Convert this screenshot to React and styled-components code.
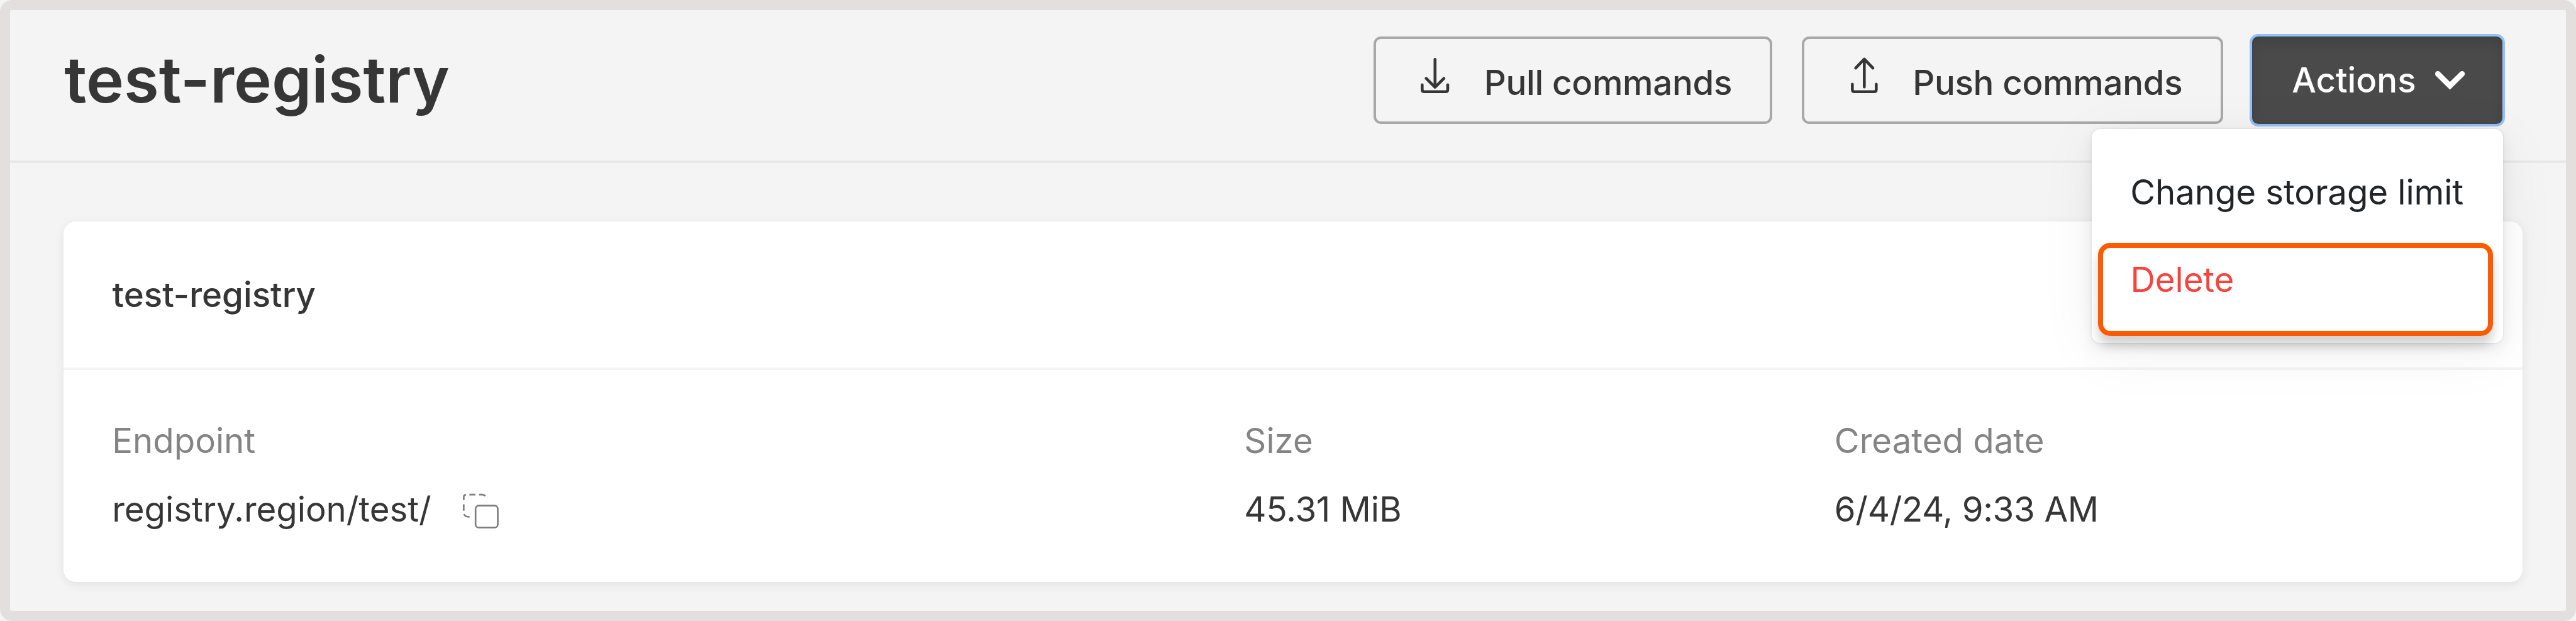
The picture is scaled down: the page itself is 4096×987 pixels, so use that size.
import React from "react";
import styled, { createGlobalStyle } from "styled-components";

const u = (n) => `${+(n * 0.975).toFixed(3)}px`;

const GlobalStyle = createGlobalStyle`
  *, *::before, *::after { box-sizing: border-box; }
  html, body { margin: 0; padding: 0; background: #f4f4f4; }
  body { font-family: Inter, "Liberation Sans", sans-serif; color: #363636; overflow: hidden; }
`;

const Page = styled.div`
  width: 4096px;
  height: 987px;
  border: 16px solid #e3dfde;
  border-radius: ${u(20)};
  background: #f4f4f4;
  display: flex;
  flex-direction: column;
`;

const Header = styled.header`
  height: ${u(249.6)};
  flex: none;
  border-bottom: 4px solid #e8e8e8;
  display: flex;
  align-items: flex-start;
  justify-content: space-between;
  padding: ${u(39)} ${u(99)} 0 ${u(88.5)};
`;

const Title = styled.h1`
  margin: ${u(11)} 0 0;
  font-size: ${u(104)};
  line-height: ${u(127)};
  font-weight: 600;
  color: #363636;
  white-space: nowrap;
`;

const Toolbar = styled.div`
  display: flex;
  align-items: flex-start;
`;

const OutlineButton = styled.button`
  width: ${(p) => u(p.$width)};
  height: ${u(143)};
  margin: ${u(4)} ${(p) => u(p.$gap)} 0 0;
  padding: 0 0 0 ${u(72)};
  display: flex;
  align-items: center;
  background: transparent;
  border: 4px solid #a8a8a8;
  border-radius: ${u(12)};
  font: 500 ${u(56)} / ${u(68)} Inter, sans-serif;
  letter-spacing: -0.32px;
  color: #363636;
  white-space: nowrap;
  svg { flex: none; margin: ${u(-16)} ${u(56.5)} 0 0; overflow: visible; }
  span { margin-top: ${u(6.5)}; }
`;

const MenuAnchor = styled.div`
  position: relative;
`;

const ActionsButton = styled.button`
  width: ${u(416.5)};
  height: ${u(151)};
  padding: 0 0 0 ${u(64.4)};
  display: flex;
  align-items: center;
  background: #4a4a4a;
  border: 4px solid #93bffa;
  border-radius: ${u(14)};
  box-shadow: inset 0 ${u(10)} ${u(20)} rgba(0, 0, 0, 0.12);
  font: 500 ${u(56)} / ${u(68)} Inter, sans-serif;
  color: #fff;
  svg { margin-left: ${u(29)}; }
`;

const Menu = styled.div`
  position: absolute;
  top: ${u(154.6)};
  right: ${u(3.5)};
  width: ${u(671)};
  height: ${u(349)};
  padding: ${u(71)} ${u(17)} 0 ${u(10)};
  background: #fff;
  border-radius: ${u(14)};
  box-shadow: 0 0 0 ${u(2)} rgba(0, 0, 0, 0.03), 0 ${u(8)} ${u(24)} rgba(0, 0, 0, 0.08),
    0 ${u(16)} ${u(96)} rgba(0, 0, 0, 0.06);
`;

const MenuItem = styled.div`
  height: ${u(115)};
  padding: 0 0 0 ${u(53)};
  font-size: ${u(56)};
  line-height: ${u(64)};
  letter-spacing: -0.1px;
  color: #212529;
  white-space: nowrap;
`;

const DangerItem = styled(MenuItem)`
  height: ${u(152)};
  padding: ${u(19.2)} 0 0 ${u(45)};
  border: 8px solid #ff5a00;
  border-radius: ${u(20)};
  color: #f9423a;
  box-shadow: 0 ${u(14)} ${u(16)} rgba(0, 0, 0, 0.18);
`;

const Card = styled.section`
  margin: ${u(94.7)} ${u(70.9)} 0 ${u(87.4)};
  height: ${u(588)};
  background: #fff;
  border-radius: ${u(20)};
  box-shadow: 0 ${u(4)} ${u(16)} rgba(0, 0, 0, 0.08);
`;

const CardHeader = styled.div`
  height: ${u(242.7)};
  border-bottom: 4px solid #f4f4f4;
  padding: ${u(85)} 0 0 ${u(79.4)};
  font-size: ${u(56)};
  line-height: ${u(68)};
  font-weight: 500;
`;

const Fields = styled.div`
  display: grid;
  grid-template-columns: ${u(1846.3)} ${u(962.5)} 1fr;
  padding: ${u(81)} 0 0 ${u(79)};
`;

const Field = styled.div`
  display: flex;
  flex-direction: column;
  gap: ${u(43)};
  font-size: ${u(56)};
  line-height: ${u(68)};
  white-space: nowrap;
`;

const Label = styled.div`
  color: #848484;
`;

const Value = styled.div`
  display: flex;
  align-items: center;
  letter-spacing: ${(p) => (p.$tight ? "-0.32px" : "-0.06px")};
  svg { margin-left: ${u(52)}; margin-top: ${u(6)}; }
`;

const PullIcon = () => (
  <svg width={u(48)} height={u(60)} viewBox="0 0 48 60" fill="none" stroke="#363636" strokeWidth="4.7" strokeLinecap="round" strokeLinejoin="round">
    <path d="M24.400 3.400V48M10 34.500L24.400 48.800L38.800 34.500" />
    <path d="M3.400 45V52.500Q3.400 56.200 7 56.200H41.500Q45.100 56.200 45.100 52.500V45" />
  </svg>
);

const PushIcon = () => (
  <svg width={u(48)} height={u(60)} viewBox="0 0 48 60" fill="none" stroke="#363636" strokeWidth="4.7" strokeLinecap="round" strokeLinejoin="round">
    <path d="M26 48.500V4M12 17.500L26 3L40 17.500" />
    <path d="M6.500 44V52.500Q6.500 56.200 10 56.200H42Q45.500 56.200 45.500 52.500V44" />
  </svg>
);

const ChevronIcon = () => (
  <svg width={u(58)} height={u(40)} viewBox="0 0 58 40" fill="none" stroke="#fff" strokeWidth="9" strokeLinecap="round">
    <path d="M6.500 9.500L26.200 29L46 9.500" />
  </svg>
);

const CopyIcon = () => (
  <svg width={u(60)} height={u(60)} viewBox="0 0 60 60" fill="none" stroke="#7c7c7c" strokeWidth="2.700">
    <rect x="20.700" y="22.200" width="36.200" height="35.800" rx="5" />
    <path d="M1.400 13V8.500Q1.400 4.300 5.200 4.300M10.700 4.200H20.500M26.500 4.200H32Q34.500 4.200 36.500 6.500M1.400 20V30.500M1.800 36Q3.500 40.500 11 40.500" />
  </svg>
);

export default function App() {
  return (
    <>
      <GlobalStyle />
      <Page>
        <Header>
          <Title>test-registry</Title>
          <Toolbar>
            <OutlineButton $width={651} $gap={48}>
              <PullIcon />
              <span>Pull commands</span>
            </OutlineButton>
            <OutlineButton $width={686.5} $gap={44}>
              <PushIcon />
              <span>Push commands</span>
            </OutlineButton>
            <MenuAnchor>
              <ActionsButton>
                Actions
                <ChevronIcon />
              </ActionsButton>
              <Menu>
                <MenuItem>Change storage limit</MenuItem>
                <DangerItem>Delete</DangerItem>
              </Menu>
            </MenuAnchor>
          </Toolbar>
        </Header>
        <Card>
          <CardHeader>test-registry</CardHeader>
          <Fields>
            <Field>
              <Label>Endpoint</Label>
              <Value>
                registry.region/test/
                <CopyIcon />
              </Value>
            </Field>
            <Field>
              <Label>Size</Label>
              <Value>45.31 MiB</Value>
            </Field>
            <Field>
              <Label>Created date</Label>
              <Value $tight>6/4/24, 9:33 AM</Value>
            </Field>
          </Fields>
        </Card>
      </Page>
    </>
  );
}
